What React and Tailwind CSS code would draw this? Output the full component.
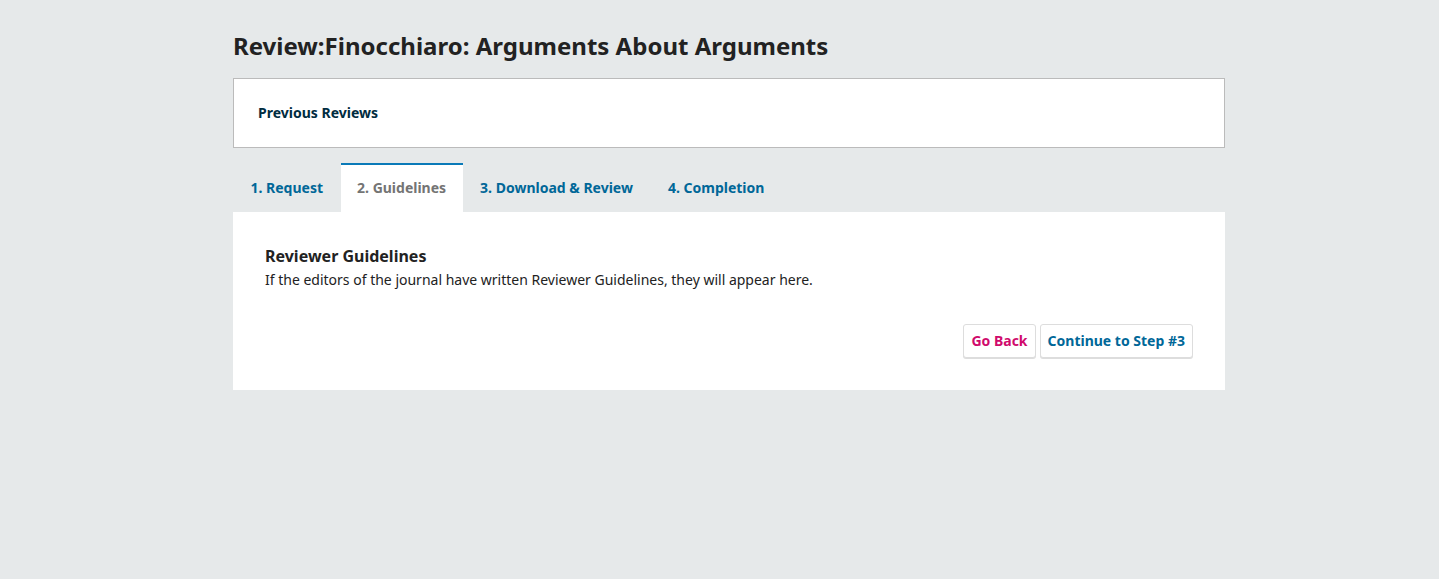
const tabs = [
  { label: "1. Request" },
  { label: "2. Guidelines", active: true },
  { label: "3. Download & Review" },
  { label: "4. Completion" },
];

function Tab({ label, active }) {
  if (active) {
    return (
      <div className="h-[49px] border-t-2 border-[#0a7ab8] bg-white px-[16.5px] pt-[13px] text-sm font-bold text-[#747474]">
        {label}
      </div>
    );
  }
  return (
    <div className="h-[49px] px-[17.5px] pt-[15px] text-sm font-bold text-[#006798]">{label}</div>
  );
}

export default function App() {
  return (
    <div
      className="min-h-[579px] bg-[#e6e9ea] text-[#222]"
      style={{ fontFamily: '"Noto Sans", "Open Sans", sans-serif' }}
    >
      <div className="ml-[233px] w-[992px] pt-[29px]">
        <h1 className="text-[24px] font-bold leading-[34px] text-[#222]">
          Review:Finocchiaro: Arguments About Arguments
        </h1>

        <div className="mt-[15px] h-[70px] border border-[#bbb] bg-white px-6 pt-[21px]">
          <span className="text-sm font-bold text-[#002c40]">Previous Reviews</span>
        </div>

        <div className="mt-[15px] flex">
          {tabs.map((t) => (
            <Tab key={t.label} {...t} />
          ))}
        </div>

        <div className="bg-white px-8 pt-[34px] pb-8">
          <h2 className="text-base font-bold leading-5">Reviewer Guidelines</h2>
          <p className="mt-1 text-sm leading-5">
            If the editors of the journal have written Reviewer Guidelines, they will appear here.
          </p>
          <div className="mt-[34px] flex justify-end gap-1">
            <button className="h-[34px] rounded-[3px] border border-[#ddd] bg-white px-[7px] text-sm font-bold text-[#d00a6c] shadow-[0_1px_0_#ddd]">
              Go Back
            </button>
            <button className="h-[34px] rounded-[3px] border border-[#ddd] bg-white px-[7px] text-sm font-bold text-[#006798] shadow-[0_1px_0_#ddd]">
              Continue to Step #3
            </button>
          </div>
        </div>
      </div>
    </div>
  );
}
